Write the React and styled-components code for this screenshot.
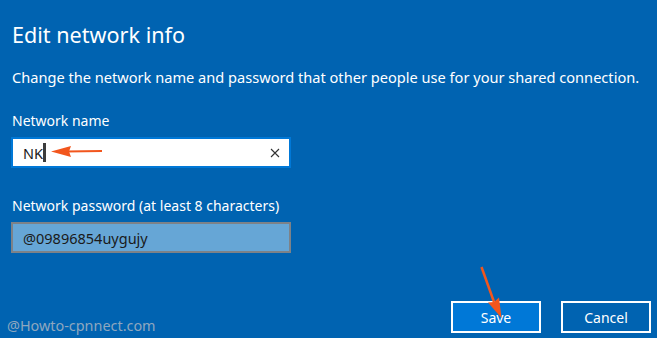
import React from "react";
import styled, { createGlobalStyle } from "styled-components";

const Global = createGlobalStyle`
  html, body { margin: 0; padding: 0; background: #0063b1; }
  body { font-family: "Noto Sans", "Open Sans", sans-serif; }
`;

const Page = styled.div`
  position: relative;
  width: 657px;
  height: 338px;
  box-sizing: border-box;
  background: #0063b1;
  padding: 21px 6px 5px 11px;
  display: flex;
  flex-direction: column;
  overflow: hidden;
  color: #ffffff;
`;

const Title = styled.h1`
  margin: 0 0 0 1px;
  font-weight: 400;
  font-size: 21.6px;
  line-height: 28px;
`;

const Desc = styled.p`
  margin: 18px 0 0 1px;
  font-size: 14.6px;
  line-height: 20px;
  white-space: nowrap;
`;

const Label = styled.label`
  display: block;
  margin: ${(p) => p.$top}px 0 0 1px;
  font-size: 14px;
  line-height: 20px;
`;

const Field = styled.div`
  margin-top: 6px;
  width: 280px;
  height: 31px;
  box-sizing: border-box;
  border: 2px solid ${(p) => (p.$filled ? "#7d8288" : "#0078d7")};
  background: ${(p) => (p.$filled ? "#66a6d6" : "#ffffff")};
  display: flex;
  align-items: center;
  padding: 0 8px 0 10px;
  font-size: 14.5px;
  color: #1a1a1a;
  position: relative;
`;

const Value = styled.span`
  display: flex;
  align-items: center;
  flex: 1;
`;

const Caret = styled.span`
  display: inline-block;
  width: 3px;
  height: 19px;
  background: #3c3c3c;
`;

const Clear = styled.span`
  width: 10px;
  height: 10px;
  display: flex;
  margin-right: 1px;
`;

const Footer = styled.div`
  margin-top: auto;
  display: flex;
  justify-content: flex-end;
  gap: 20px;
`;

const Button = styled.button`
  width: 90px;
  height: 32px;
  box-sizing: border-box;
  border: 2px solid #ffffff;
  background: ${(p) => (p.$primary ? "#0078d7" : "#0063b1")};
  color: #ffffff;
  font-family: "Noto Sans", "Open Sans", sans-serif;
  font-size: 14px;
  padding: 0;
`;

const Watermark = styled.div`
  position: absolute;
  left: 7px;
  bottom: 3px;
  font-size: 14.4px;
  color: #8ea7bf;
`;

const Overlay = styled.svg`
  position: absolute;
  left: 0;
  top: 0;
  pointer-events: none;
`;

export default function App() {
  return (
    <>
      <Global />
      <Page>
        <Title>Edit network info</Title>
        <Desc>
          Change the network name and password that other people use for your shared connection.
        </Desc>
        <Label $top={24}>Network name</Label>
        <Field>
          <Value>
            NK
            <Caret />
          </Value>
          <Clear>
            <svg width="10" height="10" viewBox="0 0 10 10">
              <path d="M1 1L9 9M9 1L1 9" stroke="#333" strokeWidth="1.1" />
            </svg>
          </Clear>
        </Field>
        <Label $top={28}>Network password (at least 8 characters)</Label>
        <Field $filled>
          <Value>@09896854uygujy</Value>
        </Field>
        <Footer>
          <Button $primary>Save</Button>
          <Button>Cancel</Button>
        </Footer>
        <Watermark>@Howto-cpnnect.com</Watermark>
        <Overlay width="657" height="338" viewBox="0 0 657 338">
          <line x1="66" y1="151.5" x2="102" y2="151" stroke="#f2561d" strokeWidth="2" />
          <path d="M51 151.5L71 146L69 151.5L71 157Z" fill="#f2561d" />
          <line x1="481.5" y1="267" x2="494" y2="302" stroke="#f2561d" strokeWidth="2.5" />
          <path d="M501.5 318L488 302.5L494 302L499 297.5Z" fill="#f2561d" />
        </Overlay>
      </Page>
    </>
  );
}
